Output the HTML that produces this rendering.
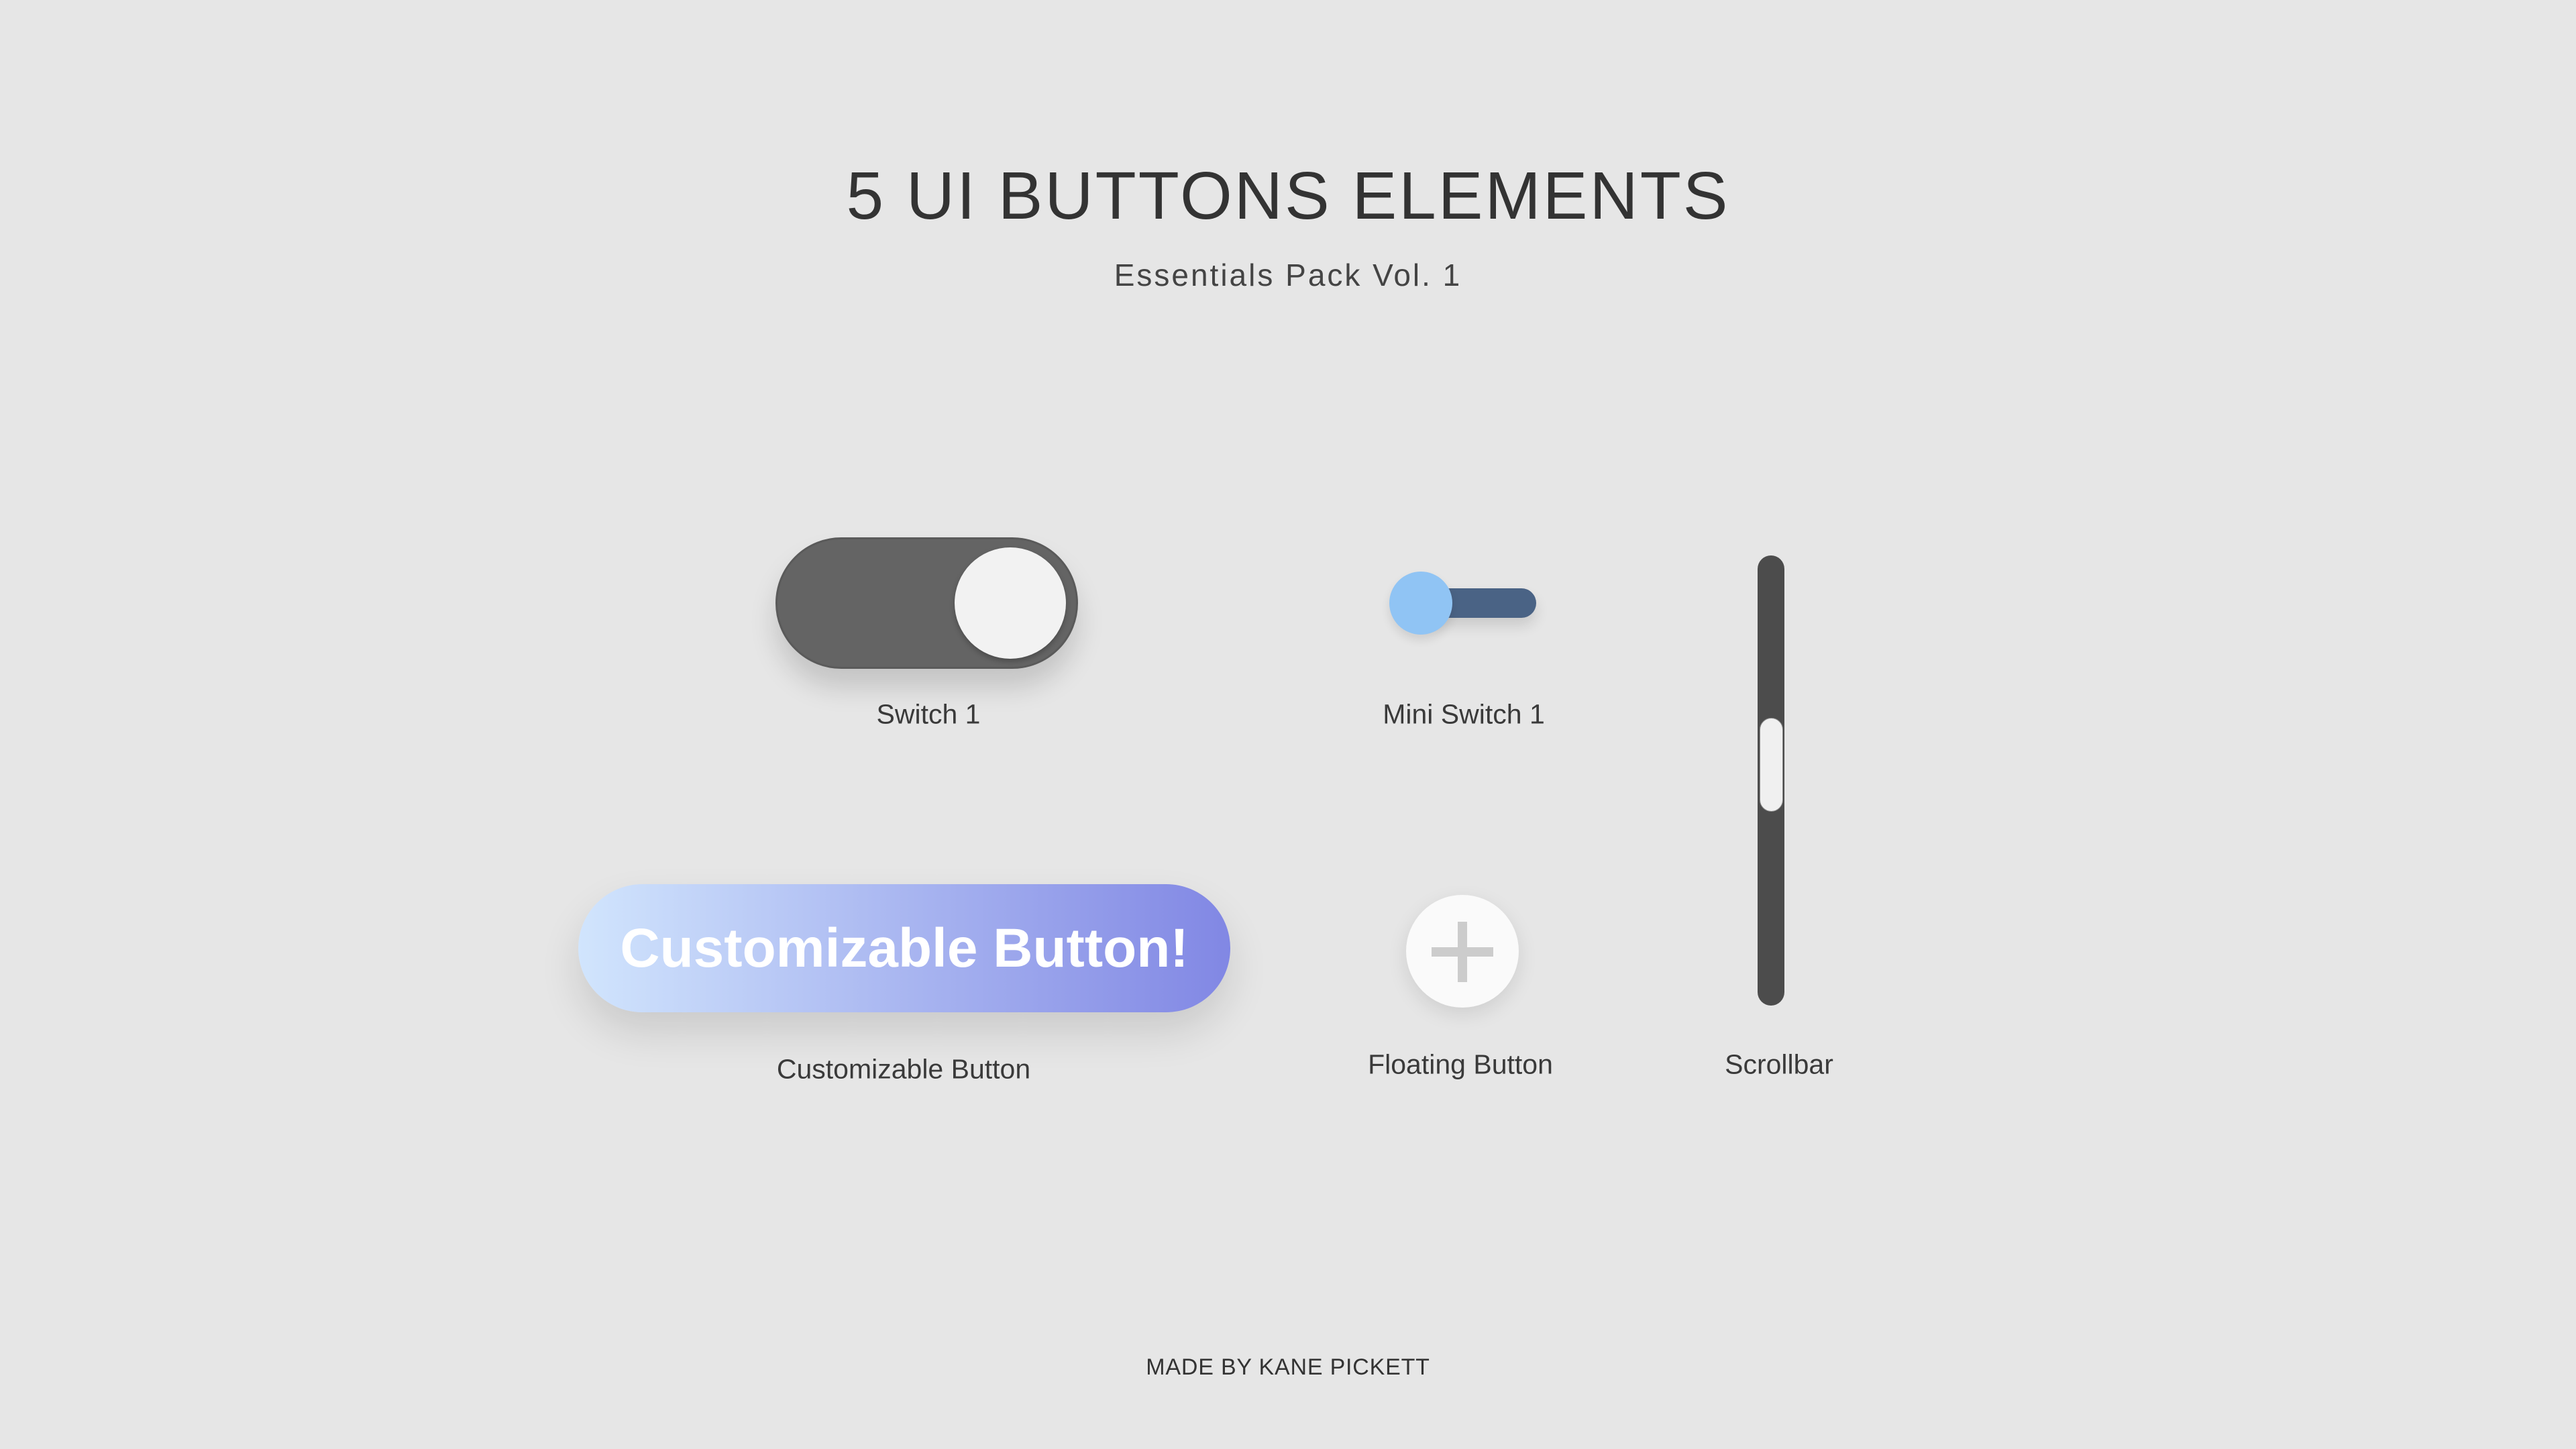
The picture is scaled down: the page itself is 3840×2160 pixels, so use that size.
<!DOCTYPE html>
<html><head><style>
html,body{margin:0;padding:0}
body{width:3840px;height:2160px;background:#e6e6e6;position:relative;overflow:hidden;font-family:"Liberation Sans",sans-serif}
.t{position:absolute;left:0;width:3840px;text-align:center;white-space:nowrap}
.lbl{position:absolute;transform:translate(-50%,-50%);white-space:nowrap;font-size:41px;color:#3a3a3a;letter-spacing:0px}
.abs{position:absolute}
</style></head><body>
<div class="t" style="top:232px;font-size:100px;letter-spacing:3px;color:#333;line-height:120px">5 UI BUTTONS ELEMENTS</div>
<div class="t" style="top:380px;font-size:46px;letter-spacing:3px;color:#444;line-height:60px">Essentials Pack Vol. 1</div>

<!-- Switch 1 -->
<div class="abs" style="left:1156px;top:801px;width:451px;height:196px;border-radius:98px;background:#646464;box-shadow:0 28px 40px rgba(0,0,0,0.15);box-sizing:border-box;border:3px solid #5a5a5a"></div>
<div class="abs" style="left:1423px;top:816px;width:166px;height:166px;border-radius:50%;background:#f2f2f2;box-shadow:0 4px 8px rgba(0,0,0,0.25)"></div>
<div class="lbl" style="left:1384px;top:1065px">Switch 1</div>

<!-- Mini switch -->
<div class="abs" style="left:2118px;top:877px;width:172px;height:44px;border-radius:22px;background:#4a6385;box-shadow:0 12px 20px rgba(0,0,0,0.12)"></div>
<div class="abs" style="left:2071px;top:852px;width:94px;height:94px;border-radius:50%;background:#90c4f4;box-shadow:0 8px 14px rgba(0,0,0,0.1)"></div>
<div class="lbl" style="left:2182px;top:1065px">Mini Switch 1</div>

<!-- Scrollbar -->
<div class="abs" style="left:2620px;top:828px;width:40px;height:671px;border-radius:20px;background:#4c4c4c"></div>
<div class="abs" style="left:2623px;top:1070px;width:35px;height:140px;border-radius:18px;background:#f0f0f0;border:1px solid #888;box-sizing:border-box"></div>
<div class="lbl" style="left:2652px;top:1587px">Scrollbar</div>

<!-- Custom button -->
<div class="abs" style="left:862px;top:1318px;width:972px;height:191px;border-radius:96px;background:linear-gradient(90deg,#d1e5fd,#8187e4);box-shadow:0 30px 60px rgba(0,0,0,0.12);display:flex;align-items:center;justify-content:center;color:#fff;font-weight:bold;font-size:82px">Customizable Button!</div>
<div class="lbl" style="left:1347px;top:1594px">Customizable Button</div>

<!-- Floating -->
<div class="abs" style="left:2096px;top:1334px;width:168px;height:168px;border-radius:50%;background:#fafafa;box-shadow:0 10px 30px rgba(0,0,0,0.1)"></div>
<div class="abs" style="left:2134px;top:1412px;width:92px;height:14px;background:#cccccc"></div>
<div class="abs" style="left:2173px;top:1374px;width:14px;height:90px;background:#cccccc"></div>
<div class="lbl" style="left:2177px;top:1587px">Floating Button</div>

<div class="t" style="top:2018px;font-size:34px;letter-spacing:0.8px;color:#333;line-height:40px">MADE BY KANE PICKETT</div>
</body></html>
